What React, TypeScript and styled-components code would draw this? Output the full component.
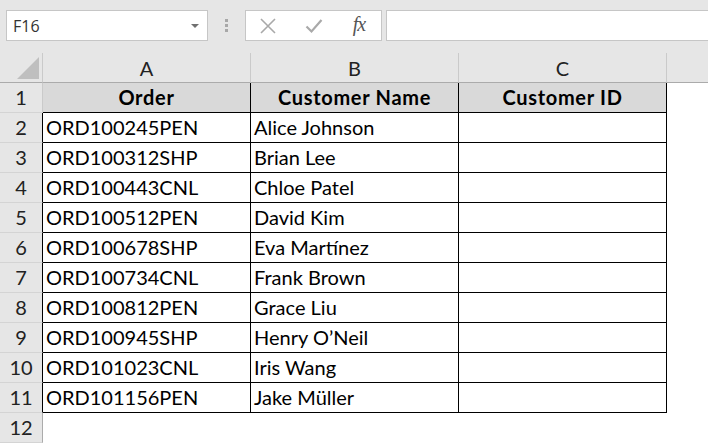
import React from "react";
import styled, { createGlobalStyle } from "styled-components";

const GlobalStyle = createGlobalStyle`
  html, body { margin: 0; padding: 0; background: #ffffff; }
  body { overflow: hidden; }
  #root { width: 708px; height: 443px; overflow: hidden; }
`;

const Page = styled.div`
  width: 708px;
  height: 443px;
  display: flex;
  flex-direction: column;
  background: #ffffff;
  overflow: hidden;
`;

const FormulaBar = styled.div`
  height: 53px;
  flex: 0 0 53px;
  box-sizing: border-box;
  background: #e6e6e6;
  display: flex;
  align-items: flex-start;
  padding: 10px 0 0 6px;
`;

const NameBox = styled.div`
  width: 202px;
  height: 31px;
  box-sizing: border-box;
  background: #ffffff;
  border: 1px solid #c6c6c6;
  display: flex;
  align-items: center;
  justify-content: space-between;
  padding: 0 8px 0 6px;
  font-family: "Open Sans", "Noto Sans", sans-serif;
  font-size: 16px;
  color: #333333;
`;

const DropArrow = styled.span`
  width: 0;
  height: 0;
  border-left: 4px solid transparent;
  border-right: 4px solid transparent;
  border-top: 4px solid #707070;
  margin-top: 1px;
`;

const DotsArea = styled.div`
  width: 37px;
  height: 31px;
  display: flex;
  flex-direction: column;
  align-items: center;
  justify-content: center;
  gap: 2px;
`;

const Dot = styled.span`
  width: 3px;
  height: 3px;
  background: #a8a8a8;
`;

const FxBox = styled.div`
  width: 137px;
  height: 31px;
  box-sizing: border-box;
  background: #ffffff;
  border: 1px solid #c6c6c6;
  display: flex;
  align-items: center;
  padding-left: 12px;
`;

const IconSlot = styled.div<{ $w: number }>`
  width: ${(p) => p.$w}px;
  height: 29px;
  display: flex;
  align-items: center;
  justify-content: center;
`;

const FxText = styled.span`
  font-family: "Liberation Serif", "DejaVu Serif", serif;
  font-style: italic;
  font-size: 20px;
  color: #555555;
  letter-spacing: -1px;
  margin-top: -2px;
`;

const FormulaInput = styled.div`
  flex: 1;
  height: 31px;
  box-sizing: border-box;
  margin-left: 4px;
  background: #ffffff;
  border: 1px solid #c6c6c6;
  border-right: none;
`;

const Grid = styled.div`
  display: grid;
  grid-template-columns: 43px 208px 208px 208px 1fr;
  grid-auto-rows: 30px;
  font-family: "Lato", "Open Sans", sans-serif;
  font-size: 20px;
  color: #000000;
`;

const Corner = styled.div`
  position: relative;
  background: #e6e6e6;
  box-sizing: border-box;
  border-right: 1px solid #cacaca;
  border-bottom: 1px solid #ababab;
`;

const CornerTriangle = styled.div`
  position: absolute;
  right: 3px;
  bottom: 3px;
  width: 0;
  height: 0;
  border-left: 22px solid transparent;
  border-bottom: 22px solid #bfbfbf;
`;

const ColHeader = styled.div<{ $last?: boolean }>`
  background: #e6e6e6;
  box-sizing: border-box;
  border-right: ${(p) => (p.$last ? "none" : "1px solid #cacaca")};
  border-bottom: 1px solid #ababab;
  display: flex;
  align-items: flex-end;
  justify-content: center;
  padding-bottom: 2px;
  line-height: 24px;
  color: #222222;
`;

const RowHeader = styled.div<{ $edge: string }>`
  background: #e6e6e6;
  box-sizing: border-box;
  border-right: 1px solid ${(p) => p.$edge};
  border-bottom: 1px solid #d4d4d4;
  display: flex;
  align-items: flex-end;
  justify-content: center;
  padding-bottom: 3px;
  line-height: 24px;
  color: #222222;
`;

const Cell = styled.div<{ $head?: boolean }>`
  box-sizing: border-box;
  background: ${(p) => (p.$head ? "#d9d9d9" : "#ffffff")};
  border-right: 1px solid #000000;
  border-bottom: 1px solid #000000;
  display: flex;
  align-items: flex-end;
  justify-content: ${(p) => (p.$head ? "center" : "flex-start")};
  padding: 0 0 3px ${(p) => (p.$head ? "0" : "3px")};
  line-height: 24px;
  font-weight: ${(p) => (p.$head ? 700 : 400)};
  letter-spacing: ${(p) => (p.$head ? "0.7px" : "0")};
  white-space: nowrap;
  overflow: hidden;
`;

const Blank = styled.div``;

const rows: [string, string][] = [
  ["ORD100245PEN", "Alice Johnson"],
  ["ORD100312SHP", "Brian Lee"],
  ["ORD100443CNL", "Chloe Patel"],
  ["ORD100512PEN", "David Kim"],
  ["ORD100678SHP", "Eva Martínez"],
  ["ORD100734CNL", "Frank Brown"],
  ["ORD100812PEN", "Grace Liu"],
  ["ORD100945SHP", "Henry O’Neil"],
  ["ORD101023CNL", "Iris Wang"],
  ["ORD101156PEN", "Jake Müller"],
];

const CrossIcon = () => (
  <svg width="18" height="18" viewBox="0 0 18 18">
    <path d="M2 2 L16 16 M16 2 L2 16" stroke="#a9a9a9" strokeWidth="1.6" fill="none" />
  </svg>
);

const CheckIcon = () => (
  <svg width="18" height="16" viewBox="0 0 18 16">
    <path d="M1.5 8.5 L6.5 13.5 L16.5 2" stroke="#a9a9a9" strokeWidth="2.2" fill="none" />
  </svg>
);

export default function App() {
  return (
    <>
      <GlobalStyle />
      <Page>
        <FormulaBar>
          <NameBox>
            <span>F16</span>
            <DropArrow />
          </NameBox>
          <DotsArea>
            <Dot />
            <Dot />
            <Dot />
          </DotsArea>
          <FxBox>
            <IconSlot $w={20}>
              <CrossIcon />
            </IconSlot>
            <IconSlot $w={26} />
            <IconSlot $w={20}>
              <CheckIcon />
            </IconSlot>
            <IconSlot $w={24} />
            <IconSlot $w={22}>
              <FxText>fx</FxText>
            </IconSlot>
          </FxBox>
          <FormulaInput />
        </FormulaBar>
        <Grid>
          <Corner>
            <CornerTriangle />
          </Corner>
          <ColHeader>A</ColHeader>
          <ColHeader>B</ColHeader>
          <ColHeader>C</ColHeader>
          <ColHeader $last />

          <RowHeader $edge="#cacaca">1</RowHeader>
          <Cell $head>Order</Cell>
          <Cell $head>Customer Name</Cell>
          <Cell $head>Customer ID</Cell>
          <Blank />

          {rows.map(([order, name], i) => (
            <React.Fragment key={order}>
              <RowHeader $edge="#000000">{i + 2}</RowHeader>
              <Cell>{order}</Cell>
              <Cell>{name}</Cell>
              <Cell />
              <Blank />
            </React.Fragment>
          ))}

          <RowHeader $edge="#ababab">12</RowHeader>
          <Blank />
          <Blank />
          <Blank />
          <Blank />
        </Grid>
      </Page>
    </>
  );
}
